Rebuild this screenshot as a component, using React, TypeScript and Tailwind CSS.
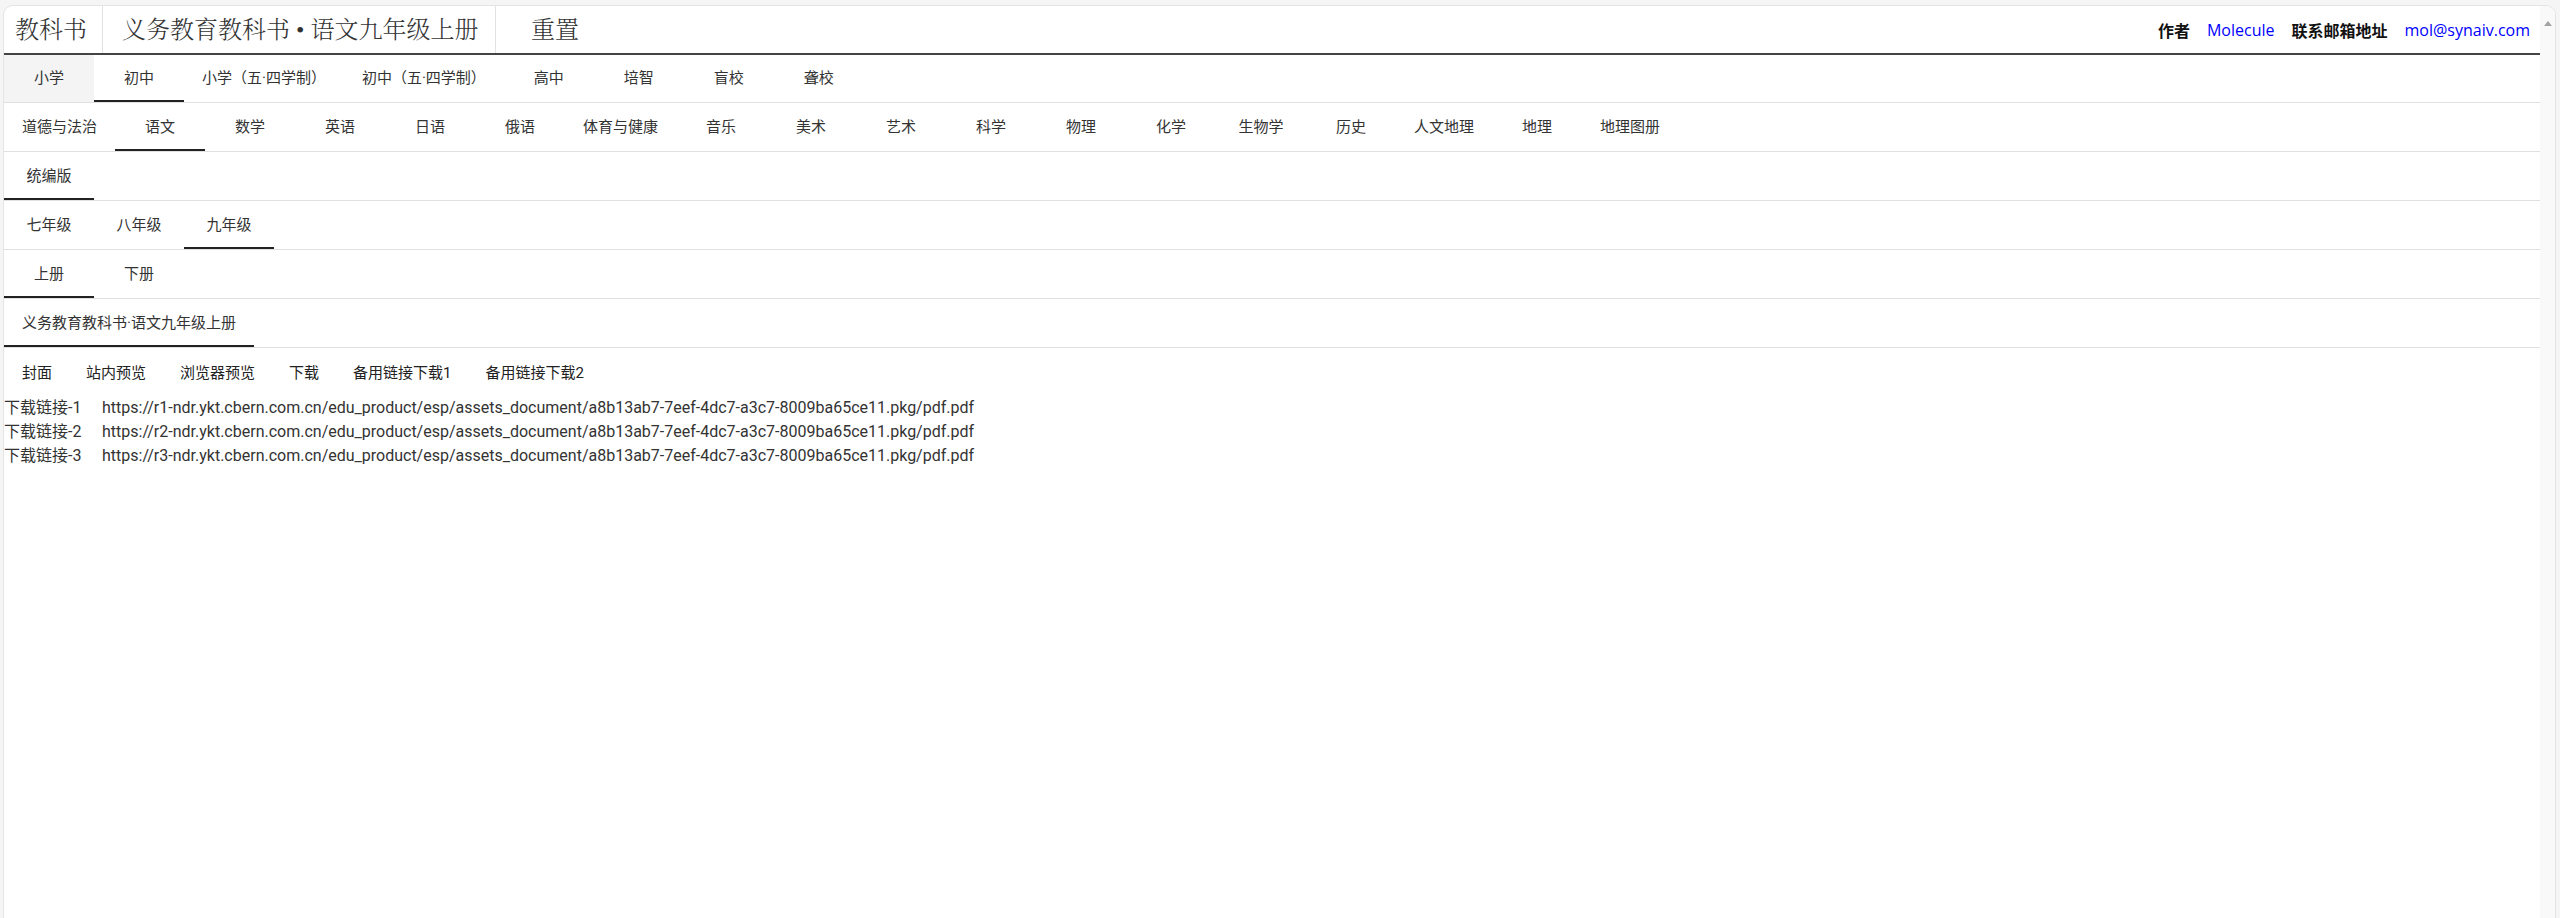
import React from "react";

const ROWS: { items: string[]; active: number; hover?: number; h: string }[] = [
  {
    items: ["小学", "初中", "小学（五·四学制）", "初中（五·四学制）", "高中", "培智", "盲校", "聋校"],
    active: 1,
    hover: 0,
    h: "h-[48px]",
  },
  {
    items: [
      "道德与法治", "语文", "数学", "英语", "日语", "俄语", "体育与健康", "音乐", "美术", "艺术",
      "科学", "物理", "化学", "生物学", "历史", "人文地理", "地理", "地理图册",
    ],
    active: 1,
    h: "h-[49px]",
  },
  { items: ["统编版"], active: 0, h: "h-[49px]" },
  { items: ["七年级", "八年级", "九年级"], active: 2, h: "h-[49px]" },
  { items: ["上册", "下册"], active: 0, h: "h-[49px]" },
  { items: ["义务教育教科书·语文九年级上册"], active: 0, h: "h-[49px]" },
];

const ACTIONS = ["封面", "站内预览", "浏览器预览", "下载", "备用链接下载1", "备用链接下载2"];

const URL_BASE =
  "-ndr.ykt.cbern.com.cn/edu_product/esp/assets_document/a8b13ab7-7eef-4dc7-a3c7-8009ba65ce11.pkg/pdf.pdf";

const serifTitle =
  "font-['Liberation_Serif','Noto_Serif_CJK_SC','Noto_Sans_CJK_SC',serif] text-[24px] font-light text-[#333]";

function Tab({ label, active, hover }: { label: string; active: boolean; hover: boolean }) {
  return (
    <div
      className={
        "relative flex h-full min-w-[90px] items-center justify-center whitespace-nowrap px-[18px] font-['Roboto','Noto_Sans_CJK_SC',sans-serif] text-[15px] text-[#333] " +
        (hover ? "bg-[#f4f4f4]" : "")
      }
    >
      {label}
      {active && <span className="absolute bottom-0 left-0 right-0 h-[2px] bg-[#222]" />}
    </div>
  );
}

export default function App() {
  return (
    <div className="h-screen w-full overflow-hidden bg-[#f5f5f5] pl-[3px] pr-[4px] pt-[5px]">
      <div className="flex h-[940px] overflow-hidden rounded-t-[10px] border border-[#e4e4e4] bg-white">
        <div className="flex min-w-0 flex-1 flex-col font-['Noto_Sans_CJK_SC',sans-serif]">
          {/* Header */}
          <div className="flex h-[49px] shrink-0 items-stretch border-b-2 border-[#444]">
            <div className={"flex w-[99px] items-center border-r border-[#e2e2e2] pl-[11px] " + serifTitle}>
              教科书
            </div>
            <div
              className={
                "flex w-[393px] items-center whitespace-nowrap border-r border-[#e2e2e2] pl-[19px] " + serifTitle
              }
            >
              义务教育教科书 • 语文九年级上册
            </div>
            <div className={"flex items-center pl-[35px] " + serifTitle}>重置</div>
            <div className="ml-auto flex items-center gap-[17px] pr-[10px] text-[16px]">
              <span className="font-bold text-[#111]">作者</span>
              <span className="font-['Open_Sans','Noto_Sans_CJK_SC',sans-serif] text-[#0000ff]">Molecule</span>
              <span className="font-bold text-[#111]">联系邮箱地址</span>
              <span className="font-['Open_Sans','Noto_Sans_CJK_SC',sans-serif] text-[#0000ff]">
                mol@synaiv.com
              </span>
            </div>
          </div>

          {/* Tab rows */}
          {ROWS.map((row, ri) => (
            <div key={ri} className={"flex shrink-0 border-b border-[#e0e0e0] " + row.h}>
              {row.items.map((it, i) => (
                <Tab key={i} label={it} active={i === row.active} hover={row.hover === i} />
              ))}
            </div>
          ))}

          {/* Actions */}
          <div className="flex pl-[1px] pt-[7px]">
            {ACTIONS.map((a) => (
              <div
                key={a}
                className="flex h-[36px] items-center whitespace-nowrap px-[17px] font-['Roboto','Noto_Sans_CJK_SC',sans-serif] text-[15px] text-[#222]"
              >
                {a}
              </div>
            ))}
          </div>

          {/* Links */}
          <div className="mt-[5px] flex flex-col font-['Roboto','Noto_Sans_CJK_SC',sans-serif] text-[16px] leading-[24px] text-[#333]">
            {[1, 2, 3].map((n) => (
              <div key={n} className="flex whitespace-nowrap">
                <span className="w-[98px] shrink-0">下载链接-{n}</span>
                <span>{`https://r${n}${URL_BASE}`}</span>
              </div>
            ))}
          </div>
        </div>

        {/* Scrollbar track */}
        <div className="flex w-[15px] shrink-0 justify-center bg-[#f9f9f9] pt-[15px]">
          <svg width="8" height="5" viewBox="0 0 8 5" className="block">
            <polygon points="4,0 8,5 0,5" fill="#a3a3a3" />
          </svg>
        </div>
      </div>
    </div>
  );
}
